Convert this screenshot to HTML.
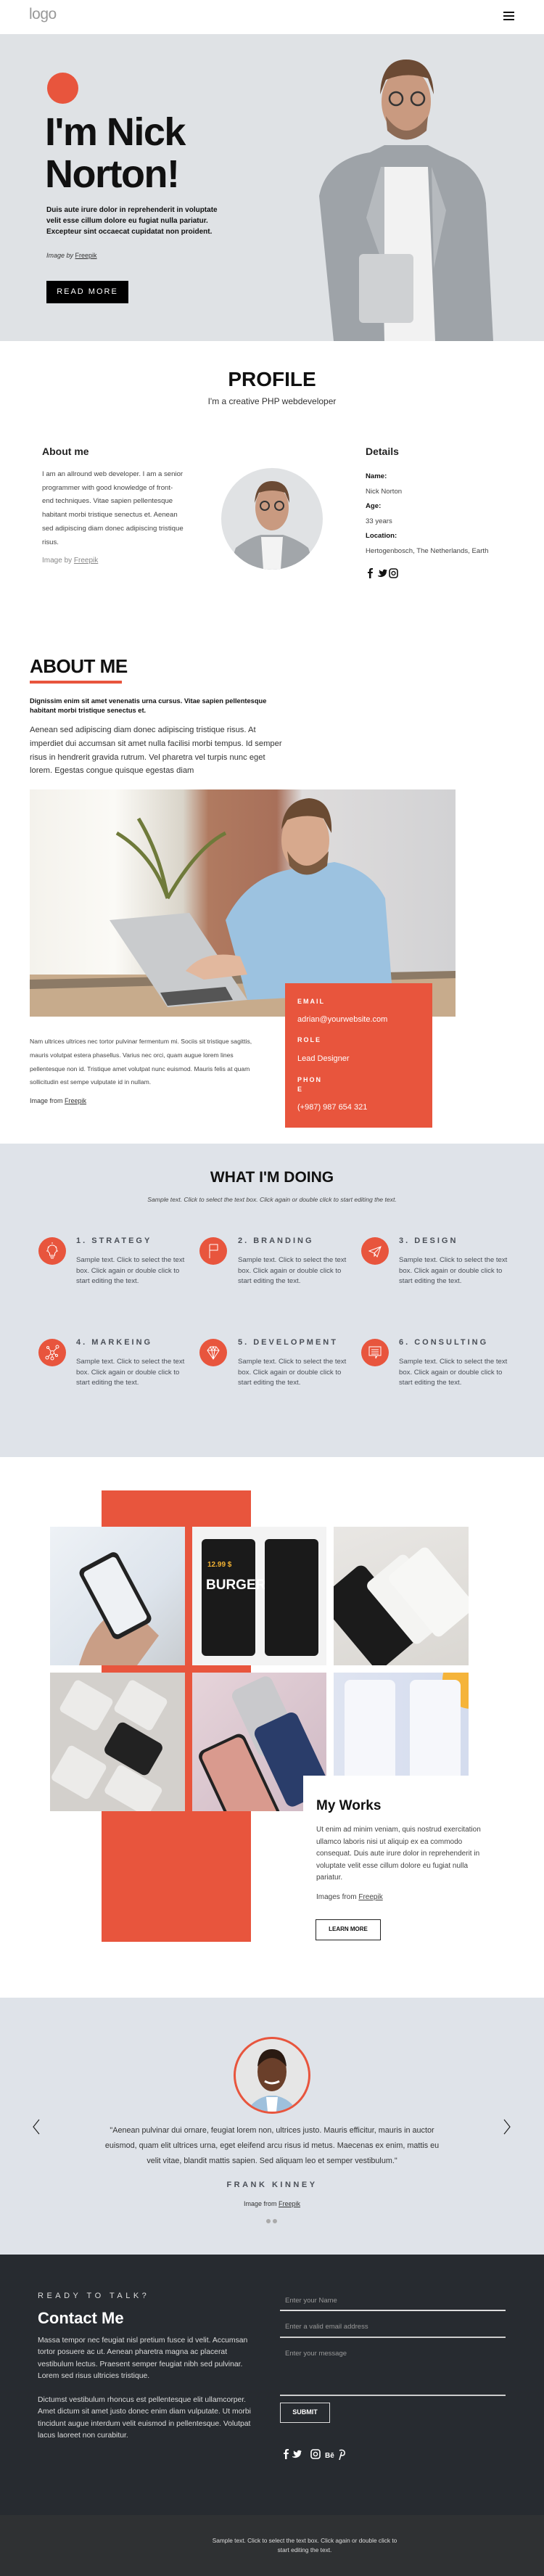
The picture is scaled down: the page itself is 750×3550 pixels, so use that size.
<!DOCTYPE html>
<html><head><meta charset="utf-8">
<style>
*{margin:0;padding:0;box-sizing:border-box}
body{width:750px;height:3550px;position:relative;background:#fff;font-family:"Liberation Sans",sans-serif;color:#222;overflow:hidden}
.a{position:absolute}
.red{background:#e8553d}
.svc h4{position:absolute;font-size:11px;letter-spacing:3px;color:#4a4f57;font-weight:bold}
.svc p{position:absolute;font-size:9.6px;line-height:14.6px;color:#4a4f57;width:150px}
.ic{position:absolute;width:38px;height:38px;border-radius:50%;background:#e8553d}
u{text-decoration:underline}
</style></head><body>
<!-- header -->
<div class="a" style="left:40px;top:8px;font-size:21px;color:#999;letter-spacing:-0.5px">logo</div>
<div class="a" style="left:694px;top:16px;width:15px;height:2px;background:#111;box-shadow:0 5px 0 #111,0 10px 0 #111"></div>
<!-- hero -->
<div class="a" style="left:0;top:47px;width:750px;height:423px;background:#dfe2e5"></div>
<svg class="a" style="left:420px;top:70px" width="270" height="400" viewBox="0 0 270 400">
<path d="M40 400 L20 200 Q30 150 90 140 L110 130 L170 130 L200 145 Q245 160 250 210 L260 400 Z" fill="#9ea3a8"/>
<path d="M105 160 L170 160 L180 400 L110 400 Z" fill="#f2f2f2"/>
<path d="M105 160 L85 230 L110 300 L110 160Z" fill="#b6babe"/>
<path d="M175 160 L195 220 L178 300 L175 160Z" fill="#b6babe"/>
<rect x="75" y="280" width="75" height="95" rx="6" fill="#cfd1d3"/>
<ellipse cx="140" cy="70" rx="34" ry="46" fill="#c99a80"/>
<path d="M104 60 Q106 12 140 12 Q176 12 178 60 L170 38 Q140 28 112 40Z" fill="#6b4a34"/>
<path d="M112 90 Q140 130 170 90 L168 110 Q140 135 114 110Z" fill="#8c6a55"/>
<circle cx="126" cy="66" r="9" fill="none" stroke="#333" stroke-width="2.5"/><circle cx="156" cy="66" r="9" fill="none" stroke="#333" stroke-width="2.5"/>
</svg>
<div class="a red" style="left:65px;top:100px;width:43px;height:43px;border-radius:50%"></div>
<div class="a" style="left:62px;top:153px;font-size:54px;line-height:58px;font-weight:bold;color:#111;letter-spacing:-1.5px">I'm Nick<br>Norton!</div>
<div class="a" style="left:64px;top:282px;width:250px;font-size:10px;line-height:15px;font-weight:bold;color:#111">Duis aute irure dolor in reprehenderit in voluptate velit esse cillum dolore eu fugiat nulla pariatur. Excepteur sint occaecat cupidatat non proident.</div>
<div class="a" style="left:64px;top:347px;font-size:9px;color:#333"><i>Image by</i> <u>Freepik</u></div>
<div class="a" style="left:64px;top:387px;width:113px;height:31px;background:#000;color:#fff;font-size:11px;letter-spacing:2px;text-align:center;line-height:31px">READ MORE</div>
<!-- profile -->
<div class="a" style="left:0;top:507px;width:750px;text-align:center;font-size:28px;font-weight:bold;color:#111">PROFILE</div>
<div class="a" style="left:0;top:546px;width:750px;text-align:center;font-size:12px;color:#333">I'm a creative PHP webdeveloper</div>
<div class="a" style="left:58px;top:614px;font-size:14px;font-weight:bold">About me</div>
<div class="a" style="left:58px;top:645px;width:195px;font-size:9.6px;line-height:18.7px;color:#444">I am an allround web developer. I am a senior programmer with good knowledge of front-end techniques. Vitae sapien pellentesque habitant morbi tristique senectus et. Aenean sed adipiscing diam donec adipiscing tristique risus.</div>
<div class="a" style="left:58px;top:767px;font-size:10px;color:#888">Image by <u>Freepik</u></div>
<div class="a" style="left:305px;top:645px;width:140px;height:140px;border-radius:50%;background:#e0e2e4;overflow:hidden">
<svg width="140" height="140" viewBox="0 0 140 140"><path d="M10 140 L20 110 Q40 95 55 92 L85 92 Q105 98 120 110 L130 140Z" fill="#a2a6aa"/><path d="M55 95 L85 95 L82 140 L58 140Z" fill="#f3f3f3"/><ellipse cx="70" cy="55" rx="23" ry="31" fill="#c99a80"/><path d="M46 48 Q48 18 70 18 Q94 18 94 48 L88 34 Q70 28 52 34Z" fill="#6b4a34"/><circle cx="60" cy="52" r="6" fill="none" stroke="#333" stroke-width="2"/><circle cx="80" cy="52" r="6" fill="none" stroke="#333" stroke-width="2"/></svg></div>
<div class="a" style="left:504px;top:614px;font-size:14px;font-weight:bold">Details</div>
<div class="a" style="left:504px;top:647px;font-size:9.6px;line-height:20.5px;color:#444"><b style="color:#111">Name:</b><br>Nick Norton<br><b style="color:#111">Age:</b><br>33 years<br><b style="color:#111">Location:</b><br>Hertogenbosch, The Netherlands, Earth</div>
<svg class="a" style="left:503px;top:782px" width="50" height="16" viewBox="0 0 50 16"><path d="M6 15V8H4V6h2V4q0-3 3-3h2v2H9.5Q8.5 3 8.5 4v2h2.5l-.4 2H8.5v7z" fill="#111"/><path d="M18 11q3 1 5-1-2 0-2.5-1.5h1.2Q19.7 8 19.5 6q.6.4 1.2.3-1.5-1.3-.6-3 1.8 2.2 4.7 2.4-.3-2.4 2-3 1.3-.3 2.2.8l1.5-.6-.8 1.3 1.3-.3-1.1 1.2q0 6-6 7.8-3 .8-5.9-.9z" fill="#111"/><rect x="34" y="2" width="11" height="12" rx="3" fill="none" stroke="#111" stroke-width="1.6"/><circle cx="39.5" cy="8" r="2.5" fill="none" stroke="#111" stroke-width="1.4"/></svg>
<!-- about me -->
<div class="a" style="left:41px;top:903px;font-size:26px;font-weight:bold;color:#111;letter-spacing:-0.5px">ABOUT ME</div>
<div class="a red" style="left:41px;top:938px;width:127px;height:4px"></div>
<div class="a" style="left:41px;top:960px;width:340px;font-size:9.3px;line-height:12.5px;font-weight:bold;color:#111">Dignissim enim sit amet venenatis urna cursus. Vitae sapien pellentesque habitant morbi tristique senectus et.</div>
<div class="a" style="left:41px;top:997px;width:350px;font-size:11.2px;line-height:18.8px;color:#333">Aenean sed adipiscing diam donec adipiscing tristique risus. At imperdiet dui accumsan sit amet nulla facilisi morbi tempus. Id semper risus in hendrerit gravida rutrum. Vel pharetra vel turpis nunc eget lorem. Egestas congue quisque egestas diam</div>
<div class="a" style="left:41px;top:1088px;width:587px;height:313px;overflow:hidden;background:linear-gradient(90deg,#f4f2ec 0%,#fbfaf6 20%,#d9d4c9 36%,#b07a60 42%,#a8705a 58%,#dedcdc 64%,#d2d2d4 100%)">
<svg width="587" height="313" viewBox="0 0 587 313"><rect x="0" y="255" width="587" height="58" fill="#c7ab8c"/><path d="M0 262 L587 250 L587 260 L0 275Z" fill="#8c7a66"/><path d="M110 180 L190 300 L300 290 L220 170Z" fill="#c9cbcd"/><path d="M180 280 L270 272 L280 290 L190 298Z" fill="#555"/><path d="M270 180 Q300 120 360 110 L420 100 Q470 110 490 150 L500 280 L300 290 Z" fill="#9cc2e0"/><ellipse cx="380" cy="70" rx="33" ry="44" fill="#d7a98d"/><path d="M347 55 Q350 15 385 12 Q418 14 416 60 L405 40 Q380 32 355 42Z" fill="#6a4a32"/><path d="M355 85 Q380 125 412 85 L410 105 Q380 130 358 105Z" fill="#7a5a40"/><path d="M215 250 Q240 220 290 230 L300 255 L240 262Z" fill="#e2b89e"/><path d="M150 40 Q180 90 190 150 M190 150 Q170 90 120 60 M190 150 Q230 80 270 60" stroke="#6f7a3a" stroke-width="5" fill="none"/></svg></div>
<div class="a red" style="left:393px;top:1355px;width:203px;height:199px"></div>
<div class="a" style="left:410px;top:1374px;font-size:9px;line-height:12px;color:#fff;font-weight:bold;letter-spacing:2px">EMAIL</div>
<div class="a" style="left:410px;top:1399px;font-size:11px;color:#fff">adrian@yourwebsite.com</div>
<div class="a" style="left:410px;top:1428px;font-size:9px;color:#fff;font-weight:bold;letter-spacing:2px">ROLE</div>
<div class="a" style="left:410px;top:1453px;font-size:11px;color:#fff">Lead Designer</div>
<div class="a" style="left:410px;top:1482px;font-size:9px;line-height:12.5px;color:#fff;font-weight:bold;letter-spacing:2px">PHON<br>E</div>
<div class="a" style="left:410px;top:1520px;font-size:11px;color:#fff">(+987) 987 654 321</div>
<div class="a" style="left:41px;top:1426px;width:330px;font-size:8.6px;line-height:18.8px;color:#444">Nam ultrices ultrices nec tortor pulvinar fermentum mi. Sociis sit tristique sagittis, mauris volutpat estera phasellus. Varius nec orci, quam augue lorem lines pellentesque non id. Tristique amet volutpat nunc euismod. Mauris felis at quam sollicitudin est sempe vulputate id in nullam.</div>
<div class="a" style="left:41px;top:1512px;font-size:9px;color:#333">Image from <u>Freepik</u></div>
<!-- what I'm doing -->
<div class="a" style="left:0;top:1576px;width:750px;height:432px;background:#dfe3e9"></div>
<div class="a" style="left:0;top:1611px;width:750px;text-align:center;font-size:21px;font-weight:bold;color:#111">WHAT I'M DOING</div>
<div class="a" style="left:0;top:1648px;width:750px;text-align:center;font-size:8.6px;font-style:italic;color:#444">Sample text. Click to select the text box. Click again or double click to start editing the text.</div>
<div class="svc">
<div class="ic" style="left:53px;top:1705px"><svg width="38" height="38" viewBox="0 0 38 38" fill="none" stroke="#fff" stroke-width="1"><path d="M19 11a6 6 0 0 0-3.5 11v3h7v-3A6 6 0 0 0 19 11zM16 27h6M17 29h4M19 7v2M11 19h2M25 19h2M13 13l1.4 1.4M25 13l-1.4 1.4"/></svg></div>
<h4 style="left:105px;top:1704px">1. STRATEGY</h4><p style="left:105px;top:1730px">Sample text. Click to select the text box. Click again or double click to start editing the text.</p>
<div class="ic" style="left:275px;top:1705px"><svg width="38" height="38" viewBox="0 0 38 38" fill="none" stroke="#fff" stroke-width="1"><path d="M14 29V10M14 10h11v8H14"/></svg></div>
<h4 style="left:328px;top:1704px">2. BRANDING</h4><p style="left:328px;top:1730px">Sample text. Click to select the text box. Click again or double click to start editing the text.</p>
<div class="ic" style="left:498px;top:1705px"><svg width="38" height="38" viewBox="0 0 38 38" fill="none" stroke="#fff" stroke-width="1"><path d="M11 19l16-6-5 14-4-5zM18 22l9-9M18 22v4l2-2"/></svg></div>
<h4 style="left:550px;top:1704px">3. DESIGN</h4><p style="left:550px;top:1730px">Sample text. Click to select the text box. Click again or double click to start editing the text.</p>
<div class="ic" style="left:53px;top:1845px"><svg width="38" height="38" viewBox="0 0 38 38" fill="none" stroke="#fff" stroke-width="1"><circle cx="19" cy="19" r="2.5"/><circle cx="13" cy="12" r="1.5"/><circle cx="26" cy="11" r="2"/><circle cx="12" cy="26" r="2"/><circle cx="19" cy="27" r="2"/><circle cx="25" cy="23" r="1.5"/><path d="M17 17l-3-4M21 17l4-4M17 21l-4 4M19 21v4M21 20l3 2"/></svg></div>
<h4 style="left:105px;top:1844px">4. MARKEING</h4><p style="left:105px;top:1870px">Sample text. Click to select the text box. Click again or double click to start editing the text.</p>
<div class="ic" style="left:275px;top:1845px"><svg width="38" height="38" viewBox="0 0 38 38" fill="none" stroke="#fff" stroke-width="1"><path d="M11 16l4-5h8l4 5-8 12zM11 16h16M15 11l2 5 2-5 2 5 2-5M17 16l2 12 2-12"/></svg></div>
<h4 style="left:328px;top:1844px">5. DEVELOPMENT</h4><p style="left:328px;top:1870px">Sample text. Click to select the text box. Click again or double click to start editing the text.</p>
<div class="ic" style="left:498px;top:1845px"><svg width="38" height="38" viewBox="0 0 38 38" fill="none" stroke="#fff" stroke-width="1"><path d="M11 11h16v12h-5l-2 4v-4h-9zM14 15h10M14 18h10M14 21h10"/></svg></div>
<h4 style="left:550px;top:1844px">6. CONSULTING</h4><p style="left:550px;top:1870px">Sample text. Click to select the text box. Click again or double click to start editing the text.</p>
</div>
<!-- works -->
<div class="a red" style="left:140px;top:2054px;width:206px;height:622px"></div>
<div class="a" style="left:69px;top:2104px;width:186px;height:191px;background:linear-gradient(135deg,#eef2f6,#dde4ec 60%,#c8ccd0)"><svg width="186" height="191"><path d="M40 191 Q60 120 110 110 L150 150 L120 191Z" fill="#c99e86"/><rect x="60" y="40" width="60" height="110" rx="8" transform="rotate(-28 90 95)" fill="#222"/><rect x="65" y="46" width="50" height="98" rx="5" transform="rotate(-28 90 95)" fill="#eef1f4"/></svg></div>
<div class="a" style="left:265px;top:2104px;width:185px;height:191px;background:#f3f3f3"><div class="a" style="left:13px;top:17px;width:74px;height:161px;background:#1a1a1a;border-radius:6px"><div style="margin:30px 8px;color:#f2b233;font-size:10px;font-weight:bold">12.99 $</div><div style="margin:-18px 6px;color:#fff;font-size:19px;font-weight:bold">BURGER</div></div><div class="a" style="left:100px;top:17px;width:74px;height:161px;background:#1a1a1a;border-radius:6px"></div></div>
<div class="a" style="left:460px;top:2104px;width:186px;height:191px;background:linear-gradient(160deg,#e9e7e4,#dad7d2)"><svg width="186" height="191"><rect x="10" y="60" width="80" height="130" rx="10" transform="rotate(-40 50 125)" fill="#1b1b1b"/><rect x="70" y="45" width="70" height="110" rx="8" transform="rotate(-40 105 100)" fill="#f4f4f2"/><rect x="100" y="35" width="70" height="110" rx="8" transform="rotate(-40 135 90)" fill="#f7f7f5"/></svg></div>
<div class="a" style="left:69px;top:2305px;width:186px;height:191px;background:#d3d0cc"><svg width="186" height="191"><rect x="20" y="20" width="60" height="50" rx="6" fill="#ecebe9" transform="rotate(30 50 45)"/><rect x="95" y="20" width="60" height="50" rx="6" fill="#ecebe9" transform="rotate(30 125 45)"/><rect x="80" y="80" width="70" height="50" rx="8" fill="#222" transform="rotate(30 115 105)"/><rect x="10" y="110" width="60" height="55" rx="6" fill="#ecebe9" transform="rotate(30 40 137)"/><rect x="80" y="140" width="70" height="45" rx="6" fill="#ecebe9" transform="rotate(30 115 162)"/></svg></div>
<div class="a" style="left:265px;top:2305px;width:185px;height:191px;background:linear-gradient(135deg,#e6d4da,#cfb9c4)"><svg width="185" height="191"><rect x="30" y="90" width="70" height="130" rx="10" fill="#222" transform="rotate(-25 65 155)"/><rect x="34" y="94" width="62" height="122" rx="8" fill="#d99a8e" transform="rotate(-25 65 155)"/><rect x="70" y="10" width="60" height="100" rx="10" fill="#c9c9cc" transform="rotate(-25 100 60)"/><rect x="105" y="60" width="65" height="120" rx="10" fill="#2a3d6a" transform="rotate(-25 137 120)"/></svg></div>
<div class="a" style="left:460px;top:2305px;width:186px;height:142px;background:linear-gradient(90deg,#dfe4f1,#d4dcee);overflow:hidden"><div class="a" style="left:150px;top:-30px;width:80px;height:80px;border-radius:50%;background:#f5b43a"></div><div class="a" style="left:15px;top:10px;width:70px;height:140px;background:#f6f7fb;border-radius:8px"></div><div class="a" style="left:105px;top:10px;width:70px;height:140px;background:#f6f7fb;border-radius:8px"></div></div>
<div class="a" style="left:418px;top:2447px;width:250px;height:240px;background:#fff"></div>
<div class="a" style="left:436px;top:2478px;font-size:19px;font-weight:bold;color:#111">My Works</div>
<div class="a" style="left:436px;top:2514px;width:240px;font-size:10px;line-height:16.5px;color:#444">Ut enim ad minim veniam, quis nostrud exercitation ullamco laboris nisi ut aliquip ex ea commodo consequat. Duis aute irure dolor in reprehenderit in voluptate velit esse cillum dolore eu fugiat nulla pariatur.</div>
<div class="a" style="left:436px;top:2609px;font-size:10px;color:#444">Images from <u>Freepik</u></div>
<div class="a" style="left:435px;top:2645px;width:90px;height:29px;border:1.5px solid #222;font-size:8px;font-weight:bold;text-align:center;line-height:26px;color:#111">LEARN MORE</div>
<!-- testimonial -->
<div class="a" style="left:0;top:2753px;width:750px;height:354px;background:#dfe3e9"></div>
<div class="a" style="left:322px;top:2807px;width:106px;height:106px;border-radius:50%;border:3px solid #e8553d;background:#e6e6e6;overflow:hidden"><svg width="100" height="100" viewBox="0 0 100 100"><path d="M15 100 Q25 82 45 78 L55 78 Q75 82 85 100Z" fill="#9ec0dc"/><path d="M42 80 L58 80 L56 100 L44 100Z" fill="#fff"/><ellipse cx="50" cy="45" rx="20" ry="27" fill="#6a3f2a"/><path d="M30 38 Q32 14 50 14 Q68 14 70 38 Q60 26 50 26 Q40 26 30 38Z" fill="#2a1a12"/><path d="M40 58 Q50 64 60 58" stroke="#fff" stroke-width="3" fill="none"/></svg></div>
<svg class="a" style="left:44px;top:2920px" width="12" height="22"><path d="M10 1 L2 11 L10 21" stroke="#222" fill="none" stroke-width="1.2"/></svg>
<svg class="a" style="left:693px;top:2920px" width="12" height="22"><path d="M2 1 L10 11 L2 21" stroke="#222" fill="none" stroke-width="1.2"/></svg>
<div class="a" style="left:140px;top:2926px;width:470px;text-align:center;font-size:10.8px;line-height:21px;color:#333">"Aenean pulvinar dui ornare, feugiat lorem non, ultrices justo. Mauris efficitur, mauris in auctor euismod, quam elit ultrices urna, eget eleifend arcu risus id metus. Maecenas ex enim, mattis eu velit vitae, blandit mattis sapien. Sed aliquam leo et semper vestibulum."</div>
<div class="a" style="left:0;top:3005px;width:750px;text-align:center;font-size:11px;font-weight:bold;letter-spacing:3.5px;color:#4a4f57">FRANK KINNEY</div>
<div class="a" style="left:0;top:3032px;width:750px;text-align:center;font-size:9px;color:#333">Image from <u>Freepik</u></div>
<div class="a" style="left:367px;top:3058px;width:6px;height:6px;border-radius:50%;background:#aaa"></div>
<div class="a" style="left:376px;top:3058px;width:6px;height:6px;border-radius:50%;background:#aaa"></div>
<!-- contact -->
<div class="a" style="left:0;top:3107px;width:750px;height:359px;background:#272b30"></div>
<div class="a" style="left:52px;top:3158px;font-size:11px;letter-spacing:4.5px;color:#ddd">READY TO TALK?</div>
<div class="a" style="left:52px;top:3182px;font-size:22px;font-weight:bold;color:#fff">Contact Me</div>
<div class="a" style="left:52px;top:3218px;width:295px;font-size:10.4px;line-height:16.4px;color:#ddd">Massa tempor nec feugiat nisl pretium fusce id velit. Accumsan tortor posuere ac ut. Aenean pharetra magna ac placerat vestibulum lectus. Praesent semper feugiat nibh sed pulvinar. Lorem sed risus ultricies tristique.<br><br>Dictumst vestibulum rhoncus est pellentesque elit ullamcorper. Amet dictum sit amet justo donec enim diam vulputate. Ut morbi tincidunt augue interdum velit euismod in pellentesque. Volutpat lacus laoreet non curabitur.</div>
<div class="a" style="left:393px;top:3165px;font-size:9.5px;color:#999">Enter your Name</div>
<div class="a" style="left:386px;top:3183px;width:311px;height:1.5px;background:#ddd"></div>
<div class="a" style="left:393px;top:3201px;font-size:9.5px;color:#999">Enter a valid email address</div>
<div class="a" style="left:386px;top:3220px;width:311px;height:1.5px;background:#ccc"></div>
<div class="a" style="left:393px;top:3238px;font-size:9.5px;color:#999">Enter your message</div>
<div class="a" style="left:386px;top:3300px;width:311px;height:1.5px;background:#ccc"></div>
<div class="a" style="left:386px;top:3311px;width:69px;height:28px;border:1.5px solid #ddd;color:#fff;font-size:9px;font-weight:bold;text-align:center;line-height:25px">SUBMIT</div>
<svg class="a" style="left:388px;top:3374px" width="100" height="16" viewBox="0 0 100 16"><path d="M5 15V8H3V6h2V4q0-3 3-3h2v2H8.5Q7.5 3 7.5 4v2h2.5l-.4 2H7.5v7z" fill="#fff"/><path d="M15 11q3 1 5-1-2 0-2.5-1.5h1.2Q16.7 8 16.5 6q.6.4 1.2.3-1.5-1.3-.6-3 1.8 2.2 4.7 2.4-.3-2.4 2-3 1.3-.3 2.2.8l1.5-.6-.8 1.3 1.3-.3-1.1 1.2q0 6-6 7.8-3 .8-5.9-.9z" fill="#fff"/><rect x="41" y="2" width="12" height="12" rx="3" fill="none" stroke="#fff" stroke-width="1.6"/><circle cx="47" cy="8" r="2.6" fill="none" stroke="#fff" stroke-width="1.4"/><text x="60" y="13" font-size="10" font-weight="bold" fill="#fff" font-family="Liberation Sans">Bē</text><path d="M80 3q5-2 7 2 1 5-4 5-1 0-1-1l-2 7M82 9l1-4" stroke="#fff" fill="none" stroke-width="1.5"/></svg>
<!-- footer -->
<div class="a" style="left:0;top:3466px;width:750px;height:84px;background:#2f3133"></div>
<div class="a" style="left:290px;top:3495px;width:260px;text-align:center;font-size:8.3px;line-height:13px;color:#ddd">Sample text. Click to select the text box. Click again or double click to start editing the text.</div>
</body></html>
